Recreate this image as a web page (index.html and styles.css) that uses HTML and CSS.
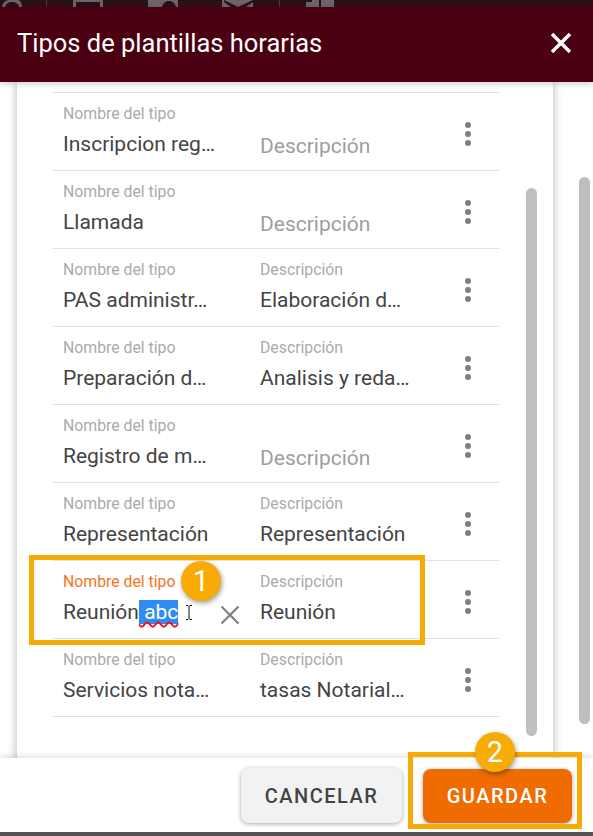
FILE: index.html
```html
<!DOCTYPE html>
<html lang="es">
<head>
    <meta charset="UTF-8">
    <meta name="viewport" content="width=device-width, initial-scale=1.0">
    <title>Tipos de plantillas horarias</title>
    <link rel="stylesheet" href="styles.css">
</head>
<body>
    <div class="dialog">
        <!-- toolbar of the page behind, almost fully covered -->
        <svg class="behind" width="593" height="7" viewBox="0 0 593 7">
            <path d="M2 7 C3 2 6 0 9 0 L19 0 C21 2 22 4 22 7 L19 7 C19 4 16 2 12 2 C8 2 6 4 5 7 Z" fill="#6d6265"/>
            <rect x="46" y="0" width="1" height="7" fill="#4d3a3e"/>
            <path d="M73 0 H103 V7 H100 V2 H76 V7 H73 Z" fill="#6d6265"/>
            <path d="M148 0 H178 V7 H176 C175 3 172 1 169 1 C166 1 163 3 162 7 H148 Z" fill="#6d6265"/>
            <path d="M222 0 H253 V7 H246 L253 2 V0 L238 7 L224 0 V2 L231 7 H222 Z" fill="#6d6265"/>
            <rect x="279" y="0" width="1" height="7" fill="#4d3a3e"/>
            <path d="M306 2 H312 V0 H319 V7 H306 Z M321 0 H334 V7 H321 Z" fill="#6d6265"/>
        </svg>

        <header class="dialog-header">
            <h1>Tipos de plantillas horarias</h1>
            <svg class="close" width="24" height="24" viewBox="0 0 24 24">
                <path d="M3 3 L21 21 M21 3 L3 21" stroke="#fff" stroke-width="3.4" fill="none"/>
            </svg>
        </header>

        <div class="dialog-body">
            <div class="card">
                <ul class="list">
                    <li class="row">
                        <div class="field"><label>Nombre del tipo</label><div class="value">Inscripcion reg…</div></div>
                        <div class="field"><div class="placeholder">Descripción</div></div>
                        <div class="dots"><i></i><i></i><i></i></div>
                    </li>
                    <li class="row">
                        <div class="field"><label>Nombre del tipo</label><div class="value">Llamada</div></div>
                        <div class="field"><div class="placeholder">Descripción</div></div>
                        <div class="dots"><i></i><i></i><i></i></div>
                    </li>
                    <li class="row">
                        <div class="field"><label>Nombre del tipo</label><div class="value">PAS administr…</div></div>
                        <div class="field"><label>Descripción</label><div class="value">Elaboración d…</div></div>
                        <div class="dots"><i></i><i></i><i></i></div>
                    </li>
                    <li class="row">
                        <div class="field"><label>Nombre del tipo</label><div class="value">Preparación d…</div></div>
                        <div class="field"><label>Descripción</label><div class="value">Analisis y reda…</div></div>
                        <div class="dots"><i></i><i></i><i></i></div>
                    </li>
                    <li class="row">
                        <div class="field"><label>Nombre del tipo</label><div class="value">Registro de m…</div></div>
                        <div class="field"><div class="placeholder">Descripción</div></div>
                        <div class="dots"><i></i><i></i><i></i></div>
                    </li>
                    <li class="row">
                        <div class="field"><label>Nombre del tipo</label><div class="value">Representación</div></div>
                        <div class="field"><label>Descripción</label><div class="value">Representación</div></div>
                        <div class="dots"><i></i><i></i><i></i></div>
                    </li>
                    <li class="row row-active">
                        <div class="field">
                            <label class="label-active">Nombre del tipo</label>
                            <div class="value">Reunión<span class="selected"> abc</span></div>
                            <svg class="ibeam" width="8" height="15" viewBox="0 0 8 15">
                                <path d="M1 .5 H3 L4 1.5 L5 .5 H7 M4 1.5 V13.5 M1 14.5 H3 L4 13.5 L5 14.5 H7" stroke="#111" fill="none"/>
                            </svg>
                            <svg class="clear" width="20" height="20" viewBox="0 0 20 20">
                                <path d="M1.5 1.5 L18.5 18.5 M18.5 1.5 L1.5 18.5" stroke="#808080" stroke-width="2.2" fill="none"/>
                            </svg>
                        </div>
                        <div class="field"><label>Descripción</label><div class="value">Reunión</div></div>
                        <div class="dots"><i></i><i></i><i></i></div>
                    </li>
                    <li class="row">
                        <div class="field"><label>Nombre del tipo</label><div class="value">Servicios nota…</div></div>
                        <div class="field"><label>Descripción</label><div class="value">tasas Notarial…</div></div>
                        <div class="dots"><i></i><i></i><i></i></div>
                    </li>
                </ul>
                <div class="scrollbar scrollbar-inner"></div>
            </div>
            <div class="scrollbar scrollbar-outer"></div>
        </div>

        <footer class="dialog-footer">
            <button class="btn btn-cancel">CANCELAR</button>
            <button class="btn btn-save">GUARDAR</button>
        </footer>
        <div class="behind-bottom"></div>

        <!-- tutorial marks -->
        <div class="mark mark-field"></div>
        <div class="mark mark-save"></div>
        <div class="badge badge-1">1</div>
        <div class="badge badge-2">2</div>
    </div>
</body>
</html>
```

FILE: styles.css
```css
* {
    box-sizing: border-box;
}
html, body {
    margin: 0;
    padding: 0;
}
body {
    font-family: Roboto, "Liberation Sans", sans-serif;
    background-color: #fff;
    overflow: hidden;
}
.dialog {
    position: relative;
    display: flex;
    flex-direction: column;
    width: 593px;
    height: 836px;
    overflow: hidden;
    background-color: #fff;
}
.behind {
    display: block;
    flex: none;
    background-color: #2a0f15;
}
.dialog-header {
    position: relative;
    z-index: 2;
    flex: none;
    display: flex;
    align-items: center;
    justify-content: space-between;
    height: 75px;
    padding: 0 20px 4px 17px;
    background-color: #4a0010;
    box-shadow: 0 2px 6px rgba(0, 0, 0, 0.2);
}
.dialog-header h1 {
    margin: 0;
    font-size: 25.5px;
    font-weight: 400;
    color: #fff;
}
.dialog-body {
    position: relative;
    flex: 1;
    min-height: 0;
    padding: 0 40px 0 17px;
    overflow: hidden;
}
.card {
    position: relative;
    height: 700px;
    padding: 10px 0 0 36px;
    background-color: #fff;
    box-shadow: 0 0 9px rgba(0, 0, 0, 0.3);
}
.list {
    margin: 0;
    padding: 0;
    width: 446px;
    list-style: none;
    border-top: 1px solid #e0e0e0;
}
.row {
    position: relative;
    display: flex;
    height: 78px;
    padding-left: 10px;
    border-bottom: 1px solid #e0e0e0;
}
.field {
    position: relative;
    width: 197px;
    flex: none;
}
.field label {
    display: block;
    margin-top: 13px;
    font-size: 15.8px;
    line-height: 16px;
    color: #aaa;
}
.field .label-active {
    color: #f4741c;
}
.value {
    margin-top: 10px;
    font-size: 21px;
    line-height: 24px;
    color: #444;
    white-space: nowrap;
}
.placeholder {
    margin-top: 41px;
    font-size: 21px;
    line-height: 24px;
    color: #9e9e9e;
}
.selected {
    white-space: pre;
    background-color: #2f8cf4;
    color: #fff;
    text-decoration: underline wavy #f01020;
    text-decoration-thickness: 1.5px;
    text-underline-offset: 2px;
}
.ibeam {
    position: absolute;
    left: 122px;
    top: 44px;
}
.clear {
    position: absolute;
    left: 157px;
    top: 44px;
}
.dots {
    display: flex;
    flex-direction: column;
    gap: 3px;
    margin: 29px 0 0 8px;
}
.dots i {
    display: block;
    width: 6px;
    height: 6px;
    border-radius: 50%;
    background-color: #7f7f7f;
}
.scrollbar {
    position: absolute;
    width: 11px;
    border-radius: 6px;
    background-color: #bfbfbf;
}
.scrollbar-inner {
    left: 509px;
    top: 106px;
    height: 548px;
}
.scrollbar-outer {
    left: 579px;
    top: 95px;
    height: 547px;
}
.dialog-footer {
    position: relative;
    z-index: 2;
    flex: none;
    display: flex;
    justify-content: flex-end;
    gap: 21px;
    height: 74px;
    padding: 10px 21px 0 0;
    background-color: #fff;
    box-shadow: 0 -2px 6px rgba(0, 0, 0, 0.12);
}
.btn {
    height: 55px;
    border: none;
    border-radius: 8px;
    font-family: inherit;
    font-size: 20px;
    font-weight: 500;
    letter-spacing: 1.5px;
    box-shadow: 0 1px 4px rgba(0, 0, 0, 0.35);
}
.btn-cancel {
    width: 161px;
    background-color: #f2f2f2;
    color: #444;
}
.btn-save {
    width: 149px;
    height: 54px;
    margin-top: 1px;
    background-color: #f06c00;
    color: #fff;
}
.behind-bottom {
    flex: none;
    height: 4px;
    background-color: #555;
}
.mark {
    position: absolute;
    z-index: 3;
    border: 5px solid #f9ab05;
    pointer-events: none;
}
.mark-field {
    left: 29px;
    top: 555px;
    width: 396px;
    height: 90px;
}
.mark-save {
    left: 408px;
    top: 752px;
    width: 174px;
    height: 77px;
}
.badge {
    position: absolute;
    z-index: 4;
    width: 40px;
    height: 40px;
    border-radius: 50%;
    background-color: #f9ab05;
    box-shadow: 1px 2px 5px rgba(0, 0, 0, 0.4);
    color: #fff;
    font-size: 29px;
    font-weight: 400;
    line-height: 40px;
    text-align: center;
}
.badge-1 {
    left: 181px;
    top: 561px;
}
.badge-2 {
    left: 475px;
    top: 732px;
}
```
